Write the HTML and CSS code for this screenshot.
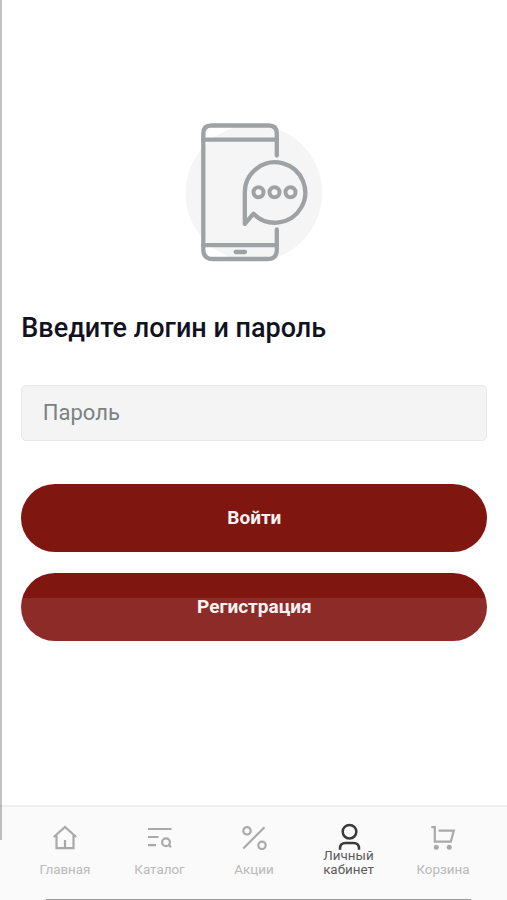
FILE: index.html
```html
<!DOCTYPE html>
<html lang="ru">
<head>
  <meta charset="UTF-8">
  <meta name="viewport" content="width=device-width, initial-scale=1.0">
  <title>Личный кабинет</title>
  <link rel="stylesheet" href="styles.css">
</head>
<body>

  <div class="edge"></div>

  <main class="login">
    <svg class="login-image" viewBox="0 0 150 150">
      <circle cx="74" cy="75" r="68.3" fill="#f5f5f5"/>
      <g fill="none" stroke="#9fa2a4" stroke-width="4.3" stroke-linecap="round" stroke-linejoin="round">
        <path d="M97 37.5V15.5Q97 7.5 89 7.5H31.5Q23.5 7.5 23.5 15.5V131.5Q23.5 141 33 141H88Q97 141 97 132V111.5"/>
        <path d="M23.5 21.7H97M23.5 127.2H97M55.8 134H65.2"/>
        <path d="M65 105.8V74.3A30.2 30.2 0 1 1 73.7 95.7Z"/>
      </g>
      <g fill="none" stroke="#9fa2a4" stroke-width="4">
        <circle cx="78.7" cy="74.3" r="5"/>
        <circle cx="94.7" cy="74.3" r="5"/>
        <circle cx="110.7" cy="74.3" r="5"/>
      </g>
    </svg>

    <h1>Введите логин и пароль</h1>

    <form class="login-form">
      <input type="password" placeholder="Пароль">
      <button type="button" class="btn">Войти</button>
      <button type="button" class="btn btn-register">Регистрация</button>
    </form>
  </main>

  <!-- Bottom menu -->
  <nav class="menu">
    <a class="menu-item">
      <svg class="icon" viewBox="0 0 30 30">
        <path d="M3.8 14L15 3.9L26.2 14M6.5 12.5V25.2H23.5V12.5M15 17V25.2"/>
      </svg>
      <span>Главная</span>
    </a>
    <a class="menu-item">
      <svg class="icon" viewBox="0 0 30 30">
        <path d="M3 6H26.5M3 14H13.500M3 22.200H11M23.800 22L26 24.300"/>
        <circle cx="21" cy="19.200" r="3.900"/>
      </svg>
      <span>Каталог</span>
    </a>
    <a class="menu-item">
      <svg class="icon" viewBox="0 0 30 30">
        <path d="M4.3 25.5L25.5 4.3"/>
        <circle cx="8" cy="7.8" r="3.7"/>
        <circle cx="23" cy="22.300" r="3.7"/>
      </svg>
      <span>Акции</span>
    </a>
    <a class="menu-item active">
      <svg class="icon" viewBox="0 0 30 30">
        <circle cx="15.5" cy="8.7" r="6.8"/>
        <path d="M6 26.7V25.5Q6 20 11.500 20H19.500Q25 20 25 25.5V26.7"/>
      </svg>
      <span>Личный<br>кабинет</span>
    </a>
    <a class="menu-item">
      <svg class="icon" viewBox="0 0 30 30">
        <path d="M3.3 4.1H6.800V18.600H22.800L25.800 7.600H10.500"/>
        <circle class="wheel" cx="8.300" cy="24.200" r="2.500"/>
        <circle class="wheel" cx="21.300" cy="24.200" r="2.500"/>
      </svg>
      <span>Корзина</span>
    </a>
  </nav>

</body>
</html>
```

FILE: styles.css
```css
* {
  box-sizing: border-box;
}

body {
  margin: 0;
  height: 900px;
  display: flex;
  flex-direction: column;
  overflow: hidden;
  background-color: #fff;
  font-family: Roboto, "Liberation Sans", sans-serif;
}

/* thin line over the left side of the screen */
.edge {
  position: absolute;
  left: 0;
  top: 0;
  width: 1.5px;
  height: 840px;
  background-color: rgba(0, 0, 0, 0.24);
}

.login {
  height: 805px;
  padding: 118px 19.6px 0 21.3px;
}

.login-image {
  display: block;
  width: 150px;
  height: 150px;
  margin: 0 auto;
  transform: translateX(0.8px);
}

h1 {
  margin: 41.5px 0 0;
  font-size: 27px;
  line-height: 36px;
  font-weight: 500;
  color: #12121f;
}

.login-form {
  display: flex;
  flex-direction: column;
  margin-top: 39px;
}

input {
  height: 56.5px;
  padding: 0 20.5px;
  margin-bottom: 43px;
  background-color: #f4f4f4;
  border: 1px solid #e7e8e8;
  border-radius: 5px;
  font-family: inherit;
  font-size: 22px;
}

input::placeholder {
  color: #7b8282;
}

.btn {
  height: 67.5px;
  margin-bottom: 21.5px;
  padding: 0;
  background-color: #801610;
  color: #fbf3f2;
  border: none;
  border-radius: 34px;
  font-family: inherit;
  font-size: 19px;
  font-weight: 700;
}

.btn-register {
  background-image: linear-gradient(#801610 25px, #8d2b29 25px);
}

.menu {
  height: 95px;
  padding-left: 1px;
  display: grid;
  grid-template-columns: repeat(5, 94.5px);
  justify-content: center;
  background-color: #fafafa;
  border-top: 2px solid #efefef;
  /* home indicator at the bottom */
  background-image: linear-gradient(#999, #999);
  background-size: 425px 1px;
  background-position: 46px 100%;
  background-repeat: no-repeat;
}

.menu-item {
  height: 70px;
  padding-top: 16px;
  display: flex;
  flex-direction: column;
  align-items: center;
  justify-content: space-between;
  color: #b9b9b9;
  font-size: 13.4px;
  line-height: 14px;
  text-align: center;
}

.menu-item.active {
  color: #5a5a5a;
}

.icon {
  width: 30px;
  height: 30px;
  flex: none;
  fill: none;
  stroke: #a9a9a9;
  stroke-width: 2.2;
}

.active .icon {
  stroke: #3b3b3b;
  stroke-width: 2.5;
  margin-bottom: -4px;
}

.icon .wheel {
  fill: #a9a9a9;
  stroke: none;
}
```
